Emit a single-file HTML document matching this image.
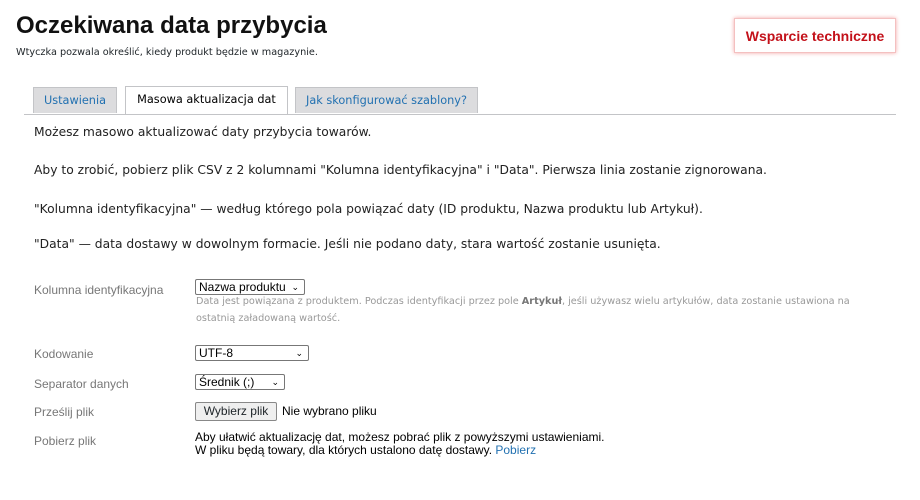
<!DOCTYPE html>
<html><head><meta charset="utf-8"><style>
body{margin:0;background:#fff;width:920px;height:500px;overflow:hidden;font-family:"DejaVu Sans",sans-serif;color:#1d2327;position:relative}
.a{position:absolute;white-space:nowrap}
h1{position:absolute;left:16px;top:12px;margin:0;font:bold 24px "Liberation Sans",Arial,sans-serif;color:#111}
.sub{left:16px;top:47px;font-size:9.7px}
.sup{left:734px;top:18px;width:160px;height:33px;border:1px solid #f4c0c0;box-shadow:0 0 4px #f5a5a5;font:bold 14px "Liberation Sans",Arial,sans-serif;color:#c3111a;display:flex;align-items:center;justify-content:center}
.line{left:24px;top:114px;width:872px;height:1px;background:#c3c4c7}
.tab{position:absolute;top:87px;height:26px;border:1px solid #c3c4c7;border-bottom:none;background:#dcdcde;font-size:11.3px;line-height:26px;text-align:center;color:#2271b1;box-sizing:border-box}
.tab.on{background:#fff;color:#000;height:28px;top:86px}
.p{left:34px;font-size:12.3px;color:#222}
.lab{left:34px;font:12px "Liberation Sans",Arial,sans-serif;color:#777}
.sel{position:absolute;left:195px;height:16px;border:1px solid #777;border-radius:2px;font:12px "Liberation Sans",Arial,sans-serif;color:#000;line-height:14px;padding-left:3px;box-sizing:border-box}
.sel b{position:absolute;right:5px;top:0;font-weight:normal;font-size:9px}
.help{left:196px;font-size:9.7px;color:#999;line-height:17px}
.t{left:195px;font:12px "Liberation Sans",Arial,sans-serif;color:#000}
</style></head><body>
<h1>Oczekiwana data przybycia</h1>
<div class="a sub">Wtyczka pozwala określić, kiedy produkt będzie w magazynie.</div>
<div class="a sup">Wsparcie techniczne</div>
<div class="a line"></div>
<div class="tab" style="left:33px;width:84px">Ustawienia</div>
<div class="tab on" style="left:125px;width:163px">Masowa aktualizacja dat</div>
<div class="tab" style="left:295px;width:183px">Jak skonfigurować szablony?</div>
<div class="a p" style="top:125px">Możesz masowo aktualizować daty przybycia towarów.</div>
<div class="a p" style="top:163px">Aby to zrobić, pobierz plik CSV z 2 kolumnami "Kolumna identyfikacyjna" i "Data". Pierwsza linia zostanie zignorowana.</div>
<div class="a p" style="top:202px">"Kolumna identyfikacyjna" — według którego pola powiązać daty (ID produktu, Nazwa produktu lub Artykuł).</div>
<div class="a p" style="top:237px">"Data" — data dostawy w dowolnym formacie. Jeśli nie podano daty, stara wartość zostanie usunięta.</div>
<div class="a lab" style="top:283px">Kolumna identyfikacyjna</div>
<div class="sel" style="top:279px;width:110px">Nazwa produktu<b>⌄</b></div>
<div class="a help" style="top:293px">Data jest powiązana z produktem. Podczas identyfikacji przez pole <b style="color:#777">Artykuł</b>, jeśli używasz wielu artykułów, data zostanie ustawiona na<br>ostatnią załadowaną wartość.</div>
<div class="a lab" style="top:347px">Kodowanie</div>
<div class="sel" style="top:345px;width:114px">UTF-8<b>⌄</b></div>
<div class="a lab" style="top:377px">Separator danych</div>
<div class="sel" style="top:374px;width:90px">Średnik (;)<b>⌄</b></div>
<div class="a lab" style="top:405px">Prześlij plik</div>
<div class="a" style="left:195px;top:402px;width:82px;height:19px;border:1px solid #888;border-radius:2px;background:#efefef;box-sizing:border-box;font:12px 'Liberation Sans',Arial,sans-serif;text-align:center;line-height:17px">Wybierz plik</div>
<div class="a t" style="left:282px;top:404px">Nie wybrano pliku</div>
<div class="a lab" style="top:434px">Pobierz plik</div>
<div class="a t" style="top:431px;line-height:13px">Aby ułatwić aktualizację dat, możesz pobrać plik z powyższymi ustawieniami.<br>W pliku będą towary, dla których ustalono datę dostawy. <span style="color:#2271b1">Pobierz</span></div>
</body></html>
